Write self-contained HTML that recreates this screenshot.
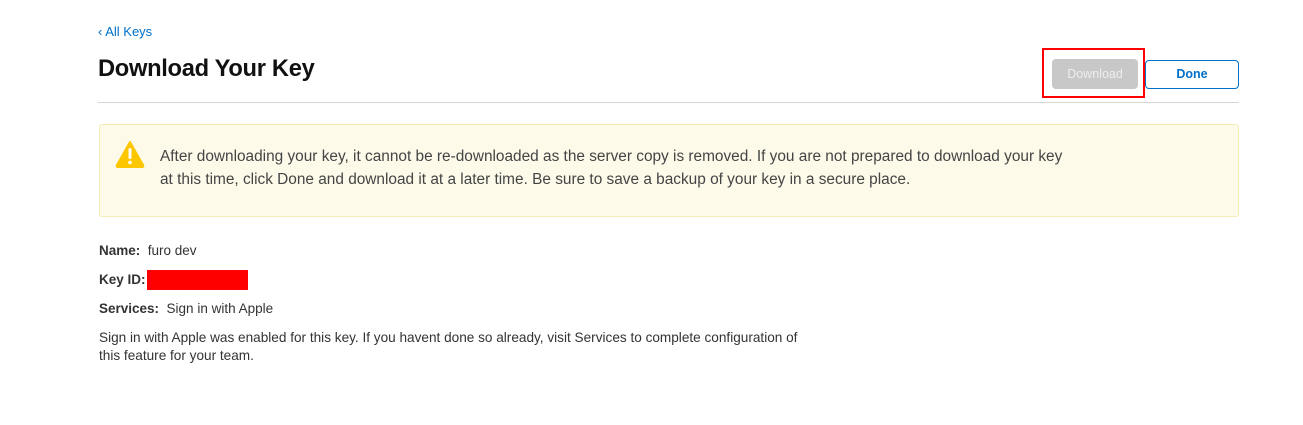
<!DOCTYPE html>
<html><head><meta charset="utf-8"><style>
*{margin:0;padding:0;box-sizing:border-box}
body{width:1303px;height:425px;background:#fff;font-family:"Liberation Sans",sans-serif;color:#333;position:relative;overflow:hidden}
.a{position:absolute}
</style></head><body>
<div class="a" style="left:98px;top:24px;font-size:13px;color:#0070c9">‹ All Keys</div>
<div class="a" style="left:98px;top:56px;font-size:23.7px;font-weight:bold;color:#111;letter-spacing:-0.3px">Download Your Key</div>
<div class="a" style="left:1042px;top:48px;width:103px;height:50px;border:2px solid #f00"></div>
<div class="a" style="left:1052px;top:59px;width:86px;height:30px;background:#c8c8c8;border-radius:4px;color:#eee;font-size:12.5px;text-align:center;line-height:30px">Download</div>
<div class="a" style="left:1145px;top:60px;width:94px;height:29px;border:1px solid #0070c9;border-radius:4px;color:#0070c9;font-size:12.5px;font-weight:bold;text-align:center;line-height:27px">Done</div>
<div class="a" style="left:98px;top:102px;width:1141px;height:1px;background:#d6d6d6"></div>
<div class="a" style="left:99px;top:124px;width:1140px;height:93px;background:#fdfaea;border:1px solid #f6ecb8;border-radius:3px"></div>
<svg class="a" style="left:115px;top:140px" width="30" height="28" viewBox="0 0 30 28"><path d="M15 2 L28 25 Q29 27 27 27 L3 27 Q1 27 2 25 Z" fill="#fcc600" stroke="#fcc600" stroke-linejoin="round" stroke-width="2"/><rect x="13.5" y="8" width="3" height="11" rx="1.5" fill="#fff"/><circle cx="15" cy="22.5" r="1.8" fill="#fff"/></svg>
<div class="a" style="left:160px;top:145px;font-size:15.4px;line-height:23px;color:#444;width:1000px;white-space:nowrap">After downloading your key, it cannot be re-downloaded as the server copy is removed. If you are not prepared to download your key<br>at this time, click Done and download it at a later time. Be sure to save a backup of your key in a secure place.</div>
<div class="a" style="left:99px;top:243px;font-size:13.5px"><b>Name:</b>&nbsp; furo dev</div>
<div class="a" style="left:99px;top:272px;font-size:13.5px"><b>Key ID:</b></div>
<div class="a" style="left:147px;top:270px;width:101px;height:20px;background:#f00"></div>
<div class="a" style="left:99px;top:301px;font-size:13.5px"><b>Services:</b>&nbsp; Sign in with Apple</div>
<div class="a" style="left:99px;top:329px;font-size:13.6px;line-height:18px;width:760px;white-space:nowrap">Sign in with Apple was enabled for this key. If you havent done so already, visit Services to complete configuration of<br>this feature for your team.</div>
</body></html>
